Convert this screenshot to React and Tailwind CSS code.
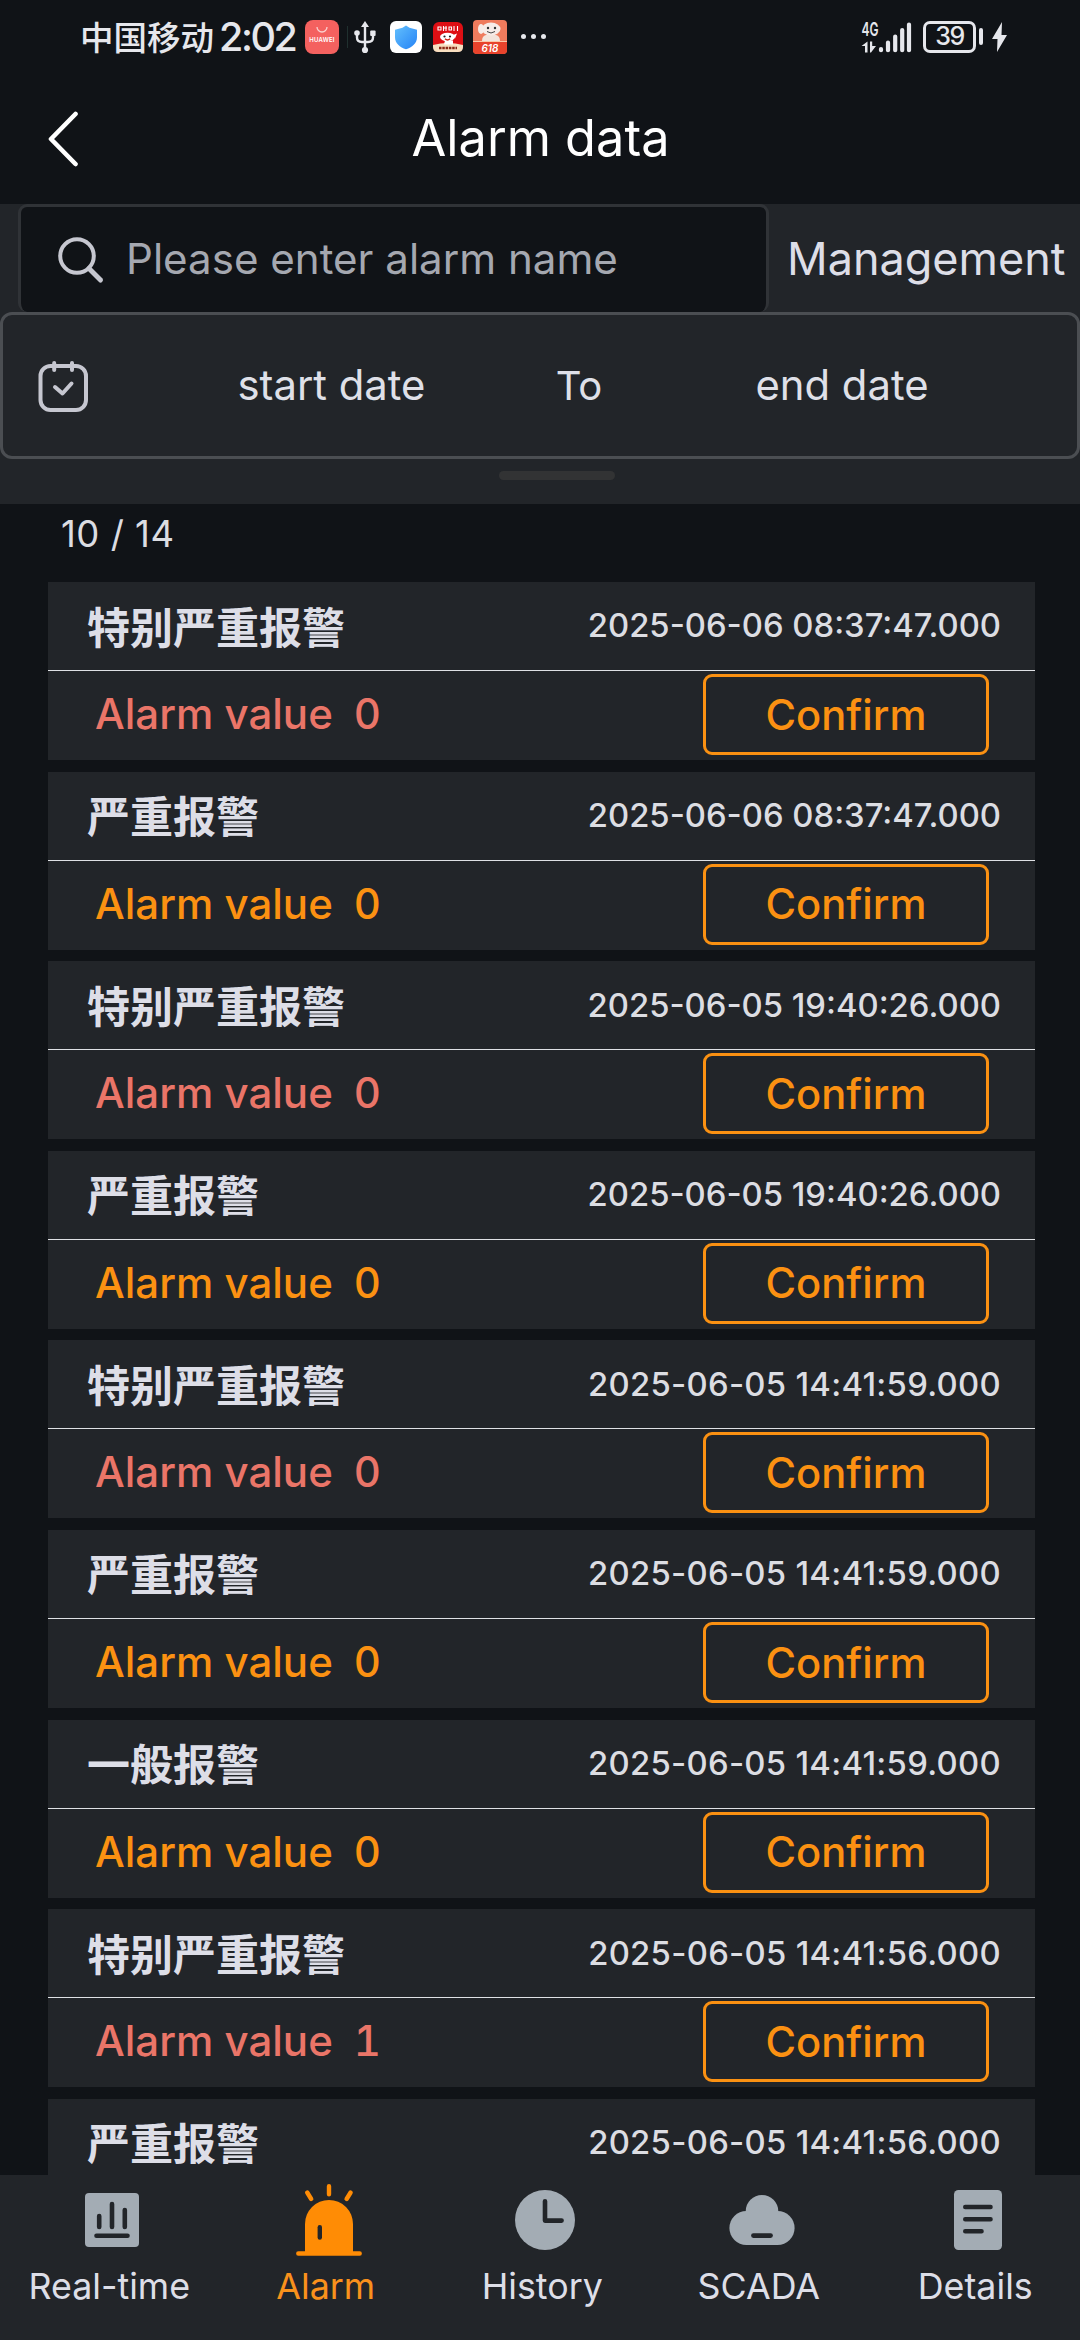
// pages/AlarmData.jsx

const alarms = [
  { name: '特别严重报警', time: '2025-06-06 08:37:47.000', value: 0, level: 'critical' },
  { name: '严重报警', time: '2025-06-06 08:37:47.000', value: 0, level: 'major' },
  { name: '特别严重报警', time: '2025-06-05 19:40:26.000', value: 0, level: 'critical' },
  { name: '严重报警', time: '2025-06-05 19:40:26.000', value: 0, level: 'major' },
  { name: '特别严重报警', time: '2025-06-05 14:41:59.000', value: 0, level: 'critical' },
  { name: '严重报警', time: '2025-06-05 14:41:59.000', value: 0, level: 'major' },
  { name: '一般报警', time: '2025-06-05 14:41:59.000', value: 0, level: 'major' },
  { name: '特别严重报警', time: '2025-06-05 14:41:56.000', value: 1, level: 'critical' },
  { name: '严重报警', time: '2025-06-05 14:41:56.000' },
]

const tabs = [
  { label: 'Real-time', Icon: RealtimeIcon },
  { label: 'Alarm', Icon: AlarmIcon, active: true },
  { label: 'History', Icon: HistoryIcon },
  { label: 'SCADA', Icon: CloudIcon },
  { label: 'Details', Icon: DetailsIcon },
]

function RealtimeIcon() {
  return (
    <svg viewBox="0 0 72 72" className="w-[72px] h-[72px]">
      <rect x="9" y="9" width="54" height="54" rx="4" fill="#a3acb4" />
      <path d="M23.2 32v11M36 20v23M48.8 26v17M20.5 51.7h31" stroke="#222529" strokeWidth="4.6" strokeLinecap="round" fill="none" />
    </svg>
  )
}

function AlarmIcon() {
  return (
    <svg viewBox="0 0 72 72" className="w-[72px] h-[72px]">
      <path d="M12 68V40a24 24 0 0 1 48 0v28z" fill="#ff8c05" />
      <path d="M5.3 69.5h61.4M36 2.2v8M14.2 8.5l4 6.5M57.6 8.5l-4 6.5" stroke="#ff8c05" strokeWidth="4.4" strokeLinecap="round" />
      <path d="M26.8 43.2v10.4" stroke="#222529" strokeWidth="4.4" strokeLinecap="round" />
    </svg>
  )
}

function HistoryIcon() {
  return (
    <svg viewBox="0 0 72 72" className="w-[72px] h-[72px]">
      <circle cx="36" cy="36" r="30" fill="#a3acb4" />
      <path d="M36 17.3v19.3h16.6" stroke="#222529" strokeWidth="4.6" strokeLinecap="round" strokeLinejoin="round" fill="none" />
    </svg>
  )
}

function CloudIcon() {
  return (
    <svg viewBox="0 0 72 72" className="w-[72px] h-[72px]">
      <circle cx="36" cy="27.4" r="16.3" fill="#a3acb4" />
      <rect x="3.4" y="27" width="65.2" height="34" rx="17" fill="#a3acb4" />
      <path d="M27.4 51.6h17.2" stroke="#222529" strokeWidth="4.6" strokeLinecap="round" />
    </svg>
  )
}

function DetailsIcon() {
  return (
    <svg viewBox="0 0 72 72" className="w-[72px] h-[72px]">
      <rect x="12" y="6" width="48" height="60" rx="4.5" fill="#a3acb4" />
      <path d="M23.2 23h25.4M23.2 35.2h25.4M23.2 47.2h16.4" stroke="#222529" strokeWidth="4.4" strokeLinecap="round" />
    </svg>
  )
}

function StatusBar() {
  return (
    <div className="h-[73px] flex items-center justify-between pl-[80px] pr-[73px] text-[#e6e7ec]">
      <div className="flex items-center">
        <span className="w-[139px] pb-[2px] text-[33.5px] leading-none font-medium font-['Noto_Sans_CJK_SC',sans-serif] whitespace-nowrap">中国移动</span>
        <span className="w-[86px] text-[39.5px] leading-none font-medium tracking-[-2.4px] pt-[2px] whitespace-nowrap">2:02</span>

        {/* HUAWEI app */}
        <span className="w-[34px] h-[34px] rounded-[8px] bg-[#f4615f] flex flex-col items-center">
          <svg viewBox="0 0 34 16" className="w-[34px] h-[16px]">
            <path d="M12 7a5 5 0 0 0 10 0" stroke="#fbd0ce" strokeWidth="1.3" fill="none" />
          </svg>
          <span className="text-[6px] leading-[8px] font-semibold tracking-[0.2px] text-white">HUAWEI</span>
        </span>

        <span className="w-px h-[22px] ml-[8px] bg-[#20302f]" />

        <svg viewBox="0 0 22 34" className="w-[22px] h-[34px] ml-[6px]">
          <path d="M11 5v24M3 14v3.5q0 4.5 5 4.5h6q5 0 5-4.5V14" stroke="#e6e7ec" strokeWidth="2.4" fill="none" />
          <path d="M11 1l4 6H7z" fill="#e6e7ec" />
          <circle cx="11" cy="30" r="3.1" fill="#e6e7ec" />
          <circle cx="3" cy="13" r="2.8" fill="#e6e7ec" />
          <rect x="16.2" y="10.5" width="5.4" height="5.4" rx="1" fill="#e6e7ec" />
        </svg>

        {/* security shield */}
        <svg viewBox="0 0 32 32" className="w-[32px] h-[32px] ml-[14px]">
          <defs>
            <linearGradient id="shield" x1="0" y1="0" x2="1" y2="1">
              <stop offset="0" stopColor="#63c0fd" />
              <stop offset="1" stopColor="#2583f6" />
            </linearGradient>
          </defs>
          <rect width="32" height="32" rx="6" fill="#fff" />
          <path d="M16 4.5l3.5 2.2 7.5 2v7.5c0 6-5 10-11 12-6-2-11-6-11-12V8.7l7.5-2z" fill="url(#shield)" />
        </svg>

        {/* shopping app */}
        <svg viewBox="0 0 30 30" className="w-[30px] h-[30px] ml-[11px]">
          <rect width="30" height="30" rx="6" fill="#de0f14" />
          <path d="M0 23q15-4 30 0v2q0 5-5 5H5q-5 0-5-5z" fill="#f8dfc0" />
          <path d="M5 5h3v3H5zM10.5 4v5M10 6h4M13 4v5M16 5h2.5v3H16zM21 4v5M24.5 4v5" stroke="#fff" strokeWidth="1.1" fill="none" />
          <ellipse cx="14.5" cy="15" rx="7.5" ry="4.2" fill="#fff" />
          <path d="M12 18.5h8v4h-9zM20 13l4-1.5-2 5z" fill="#fff" />
          <circle cx="11.5" cy="14.5" r="1.1" fill="#222" />
          <circle cx="17" cy="14.5" r="1.1" fill="#222" />
          <path d="M12 16.8q2.5 2.5 5 0" stroke="#c21" strokeWidth="1.4" fill="none" />
          <path d="M6 26h18" stroke="#8a2a18" strokeWidth="2.4" strokeDasharray="2.5 0.8" />
        </svg>

        {/* 618 sale app */}
        <svg viewBox="0 0 34 34" className="w-[34px] h-[34px] ml-[10px]">
          <rect width="34" height="34" rx="4" fill="#ef7b5d" />
          <path d="M0 22h34v8q0 4-4 4H4q-4 0-4-4z" fill="#e8432c" />
          <path d="M0 21.5h34" stroke="#f9c8a8" strokeWidth="1" />
          <path d="M9 21q0-5 4-6h10q4 1 4 6z" fill="#f3e4dc" />
          <ellipse cx="18" cy="9" rx="9.5" ry="6.5" fill="#f7ece8" />
          <ellipse cx="8" cy="9" rx="3" ry="5" fill="#f7ece8" />
          <circle cx="15" cy="8" r="1.2" fill="#333" />
          <circle cx="22" cy="8" r="1.2" fill="#333" />
          <path d="M14 11.5q4 3 8 0" stroke="#444" strokeWidth="1" fill="none" />
          <text x="17" y="31.5" textAnchor="middle" fontSize="10" fontStyle="italic" fontWeight="600" fill="#fff">618</text>
        </svg>

        <div className="flex gap-[5px] ml-[14px]">
          <i className="w-[5px] h-[5px] rounded-full bg-[#e6e7ec]" />
          <i className="w-[5px] h-[5px] rounded-full bg-[#e6e7ec]" />
          <i className="w-[5px] h-[5px] rounded-full bg-[#e6e7ec]" />
        </div>
      </div>

      <div className="flex items-center">
        <svg viewBox="0 0 50 32" className="w-[50px] h-[32px] overflow-visible">
          <text x="0.5" y="15" fontSize="19" fontWeight="600" textLength="17" lengthAdjust="spacingAndGlyphs" fill="#e6e7ec">4G</text>
          <path d="M6.5 20.5v11H4V25H0.5zM9 20.5h2.2V25h3.8l-5 6.5H9z" fill="#e6e7ec" />
          <path d="M20 28v1.2M27 21.5v7.7M34.2 15.5v13.7M41.2 9v20.2M48 3.5v25.7" stroke="#e6e7ec" strokeWidth="4.2" strokeLinecap="round" />
        </svg>
        <span className="w-[53px] h-[32px] ml-[12px] border-[3px] border-[#e6e7ec] rounded-[7px] flex items-center justify-center text-[25px] leading-none font-medium tracking-[-1.5px]">39</span>
        <span className="w-[4px] h-[17px] ml-[3px] rounded-full bg-[#e6e7ec]" />
        <svg viewBox="0 0 15 30" className="w-[15px] h-[30px] ml-[9px]">
          <path d="M10 0L0 17h5.5L5 30l10-17H9.5z" fill="#e6e7ec" />
        </svg>
      </div>
    </div>
  )
}

function AlarmCard({ alarm }) {
  // the digit 1 is narrow, open the spacing a little so the times line up
  const narrow = alarm.time.split('1').length > 2

  return (
    <div className="h-[178px] shrink-0 bg-[#222529]">
      <div className="h-[89px] flex items-center justify-between pl-[39px] pr-[34px] border-b border-[#dfe1e5]">
        <h2 className="pb-[2px] text-[43px] leading-none font-bold text-[#dddee7] font-['Noto_Sans_CJK_SC',sans-serif] whitespace-nowrap">{alarm.name}</h2>
        <span className={`text-[32.8px] font-medium text-[#dcdde2] whitespace-nowrap ${narrow ? 'tracking-[0.3px]' : ''}`}>{alarm.time}</span>
      </div>
      {alarm.value !== undefined && (
        <div className={`h-[89px] flex items-center justify-between pl-[47px] pr-[46px] text-[42px] font-medium ${alarm.level === 'critical' ? 'text-[#ea7568]' : 'text-[#fb9112]'}`}>
          <div className="flex gap-[21px] leading-none -mt-[3px] tabular-nums whitespace-nowrap">
            <span>Alarm value</span>
            <span>{alarm.value}</span>
          </div>
          <button className="w-[286px] h-[81px] -mt-[2px] pt-[2px] border-[3px] border-[#fb9112] rounded-[9px] text-[41.7px] leading-none font-medium text-[#fb9112]">
            Confirm
          </button>
        </div>
      )}
    </div>
  )
}

function App() {
  return (
    <div className="w-[1080px] h-[2340px] flex flex-col overflow-hidden bg-[#101317] font-['Inter','Noto_Sans_CJK_SC',sans-serif]">
      <StatusBar />

      <header className="h-[131px] flex items-center pl-[47px] pr-[78px]">
        <svg viewBox="0 0 32 56" className="w-[32px] h-[56px]">
          <path d="M28.5 3L4 28l24.5 25" stroke="#fff" strokeWidth="4.6" strokeLinecap="round" strokeLinejoin="round" fill="none" />
        </svg>
        <h1 className="flex-1 text-center text-[50.5px] leading-none text-white">Alarm data</h1>
      </header>

      <section className="h-[300px] bg-[#222529] flex flex-col items-center">
        <div className="w-full h-[108px] flex items-center pl-[18px]">
          <div className="w-[751px] h-[108px] flex items-center pl-[36px] border-[3px] border-b-0 border-[#303337] rounded-[9px] bg-[#101317]">
            <svg viewBox="0 0 48 48" className="w-[48px] h-[48px]">
              <circle cx="20" cy="20" r="16.8" stroke="#c6c7d0" strokeWidth="4" fill="none" />
              <path d="M32 32.5l11.5 11.5" stroke="#c6c7d0" strokeWidth="5" strokeLinecap="round" />
            </svg>
            <span className="ml-[21px] text-[42.1px] leading-none text-[#a5a8b0] whitespace-nowrap">Please enter alarm name</span>
          </div>
          <span className="ml-[18px] text-[45px] leading-none text-[#dddee7] whitespace-nowrap">Management</span>
        </div>

        <div className="w-full h-[147px] flex items-center pl-[33px] border-[3px] border-[#4b4e52] rounded-[12px] text-[41.8px] leading-none text-[#dfe0e8]">
          <svg viewBox="0 0 54 54" className="w-[54px] h-[54px]">
            <rect x="4.5" y="7" width="45.5" height="44" rx="10" stroke="#c6c7d0" strokeWidth="4" fill="none" />
            <path d="M18.2 4v7M36 4v7M19 28l7.5 6.5 9-10" stroke="#c6c7d0" strokeWidth="4" strokeLinecap="round" strokeLinejoin="round" fill="none" />
          </svg>
          <span className="w-[416px] pl-[67px] text-center whitespace-nowrap">start date</span>
          <span className="w-[146px] text-center text-[40px] whitespace-nowrap">To</span>
          <span className="w-[380px] text-center whitespace-nowrap">end date</span>
        </div>

        <div className="w-[116px] h-[9px] mt-[12px] ml-[33px] rounded-full bg-[#323334]" />
      </section>

      <div className="h-[78px] shrink-0 flex items-center pl-[61px] pb-[18px] text-[36.5px] tracking-[0.5px] leading-none text-[#dcdde2]">10 / 14</div>

      <main className="flex-1 min-h-0 overflow-hidden flex flex-col gap-[11.6px] pl-[48px] pr-[45px]">
        {alarms.map((alarm, i) => (
          <AlarmCard key={i} alarm={alarm} />
        ))}
      </main>

      <nav className="h-[165px] shrink-0 flex pt-[9px] pl-px bg-[#222529]">
        {tabs.map(({ label, Icon, active }) => (
          <a key={label} className={`w-[216.5px] shrink-0 flex flex-col items-center text-[35.8px] leading-[54px] ${active ? 'text-[#f9911c]' : 'text-[#dddee7]'}`}>
            <span className="ml-[6px]"><Icon /></span>
            <span className="mt-[3px] whitespace-nowrap">{label}</span>
          </a>
        ))}
      </nav>
    </div>
  )
}

export default App
